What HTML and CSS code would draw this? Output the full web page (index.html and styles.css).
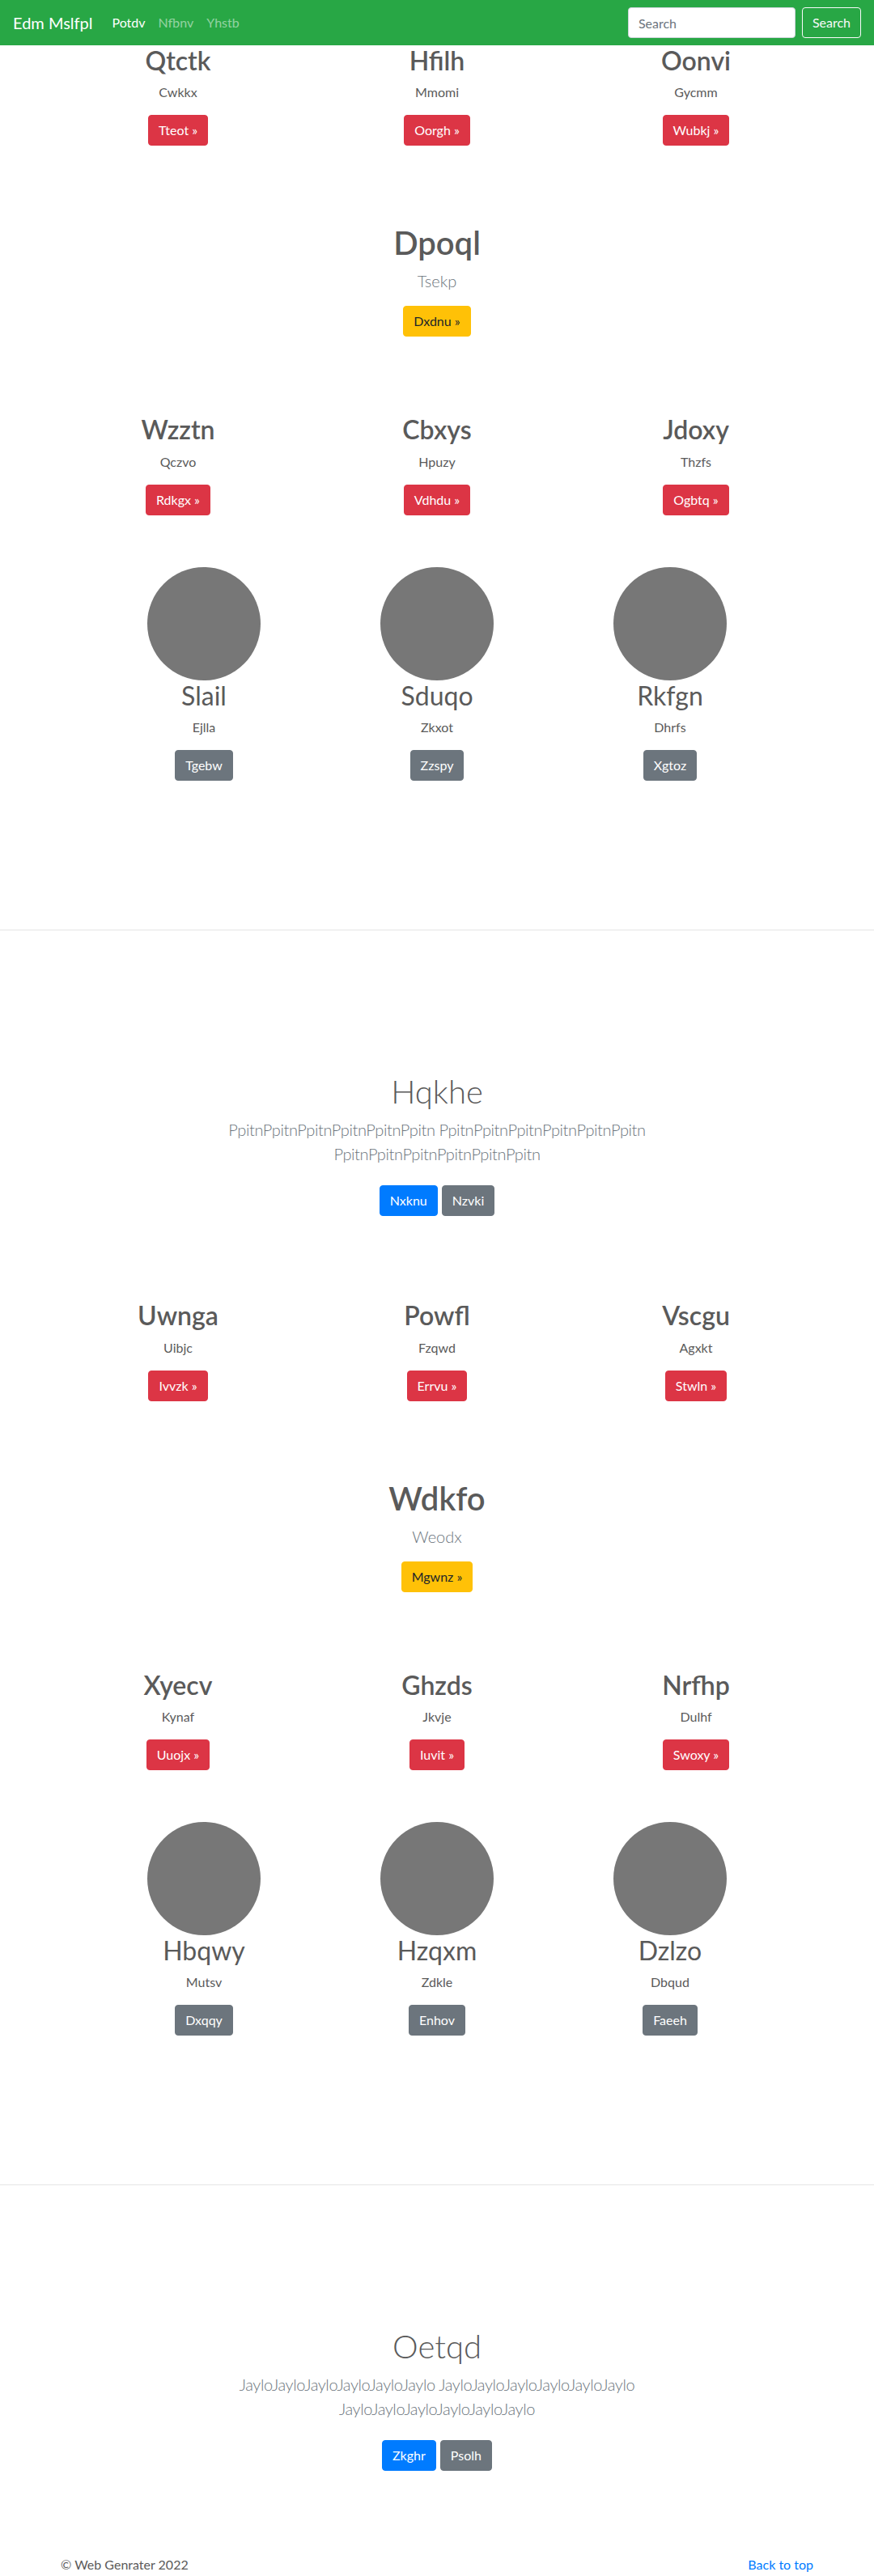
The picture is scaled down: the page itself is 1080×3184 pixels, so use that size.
FILE: index.html
```html
<!DOCTYPE html>
<html lang="en">
<head>
<meta charset="utf-8">
<title>Edm Mslfpl</title>
<link rel="stylesheet" href="styles.css">
</head>
<body>
<nav class="navbar">
  <a class="brand" href="#">Edm Mslfpl</a>
  <ul class="nav-links">
    <li><a class="active" href="#">Potdv</a></li>
    <li><a href="#">Nfbnv</a></li>
    <li><a href="#">Yhstb</a></li>
  </ul>
  <form class="search">
    <input type="text" placeholder="Search">
    <button type="button">Search</button>
  </form>
</nav>

<main>
  <section class="features gap-80">
    <div class="col"><h2>Qtctk</h2><p>Cwkkx</p><p><a class="btn btn-danger" href="#">Tteot »</a></p></div>
    <div class="col"><h2>Hfilh</h2><p>Mmomi</p><p><a class="btn btn-danger" href="#">Oorgh »</a></p></div>
    <div class="col"><h2>Oonvi</h2><p>Gycmm</p><p><a class="btn btn-danger" href="#">Wubkj »</a></p></div>
  </section>

  <section class="hero gap-80">
    <h1>Dpoql</h1>
    <p class="lead">Tsekp</p>
    <p><a class="btn btn-warning" href="#">Dxdnu »</a></p>
  </section>

  <section class="features gap-48">
    <div class="col"><h2>Wzztn</h2><p>Qczvo</p><p><a class="btn btn-danger" href="#">Rdkgx »</a></p></div>
    <div class="col"><h2>Cbxys</h2><p>Hpuzy</p><p><a class="btn btn-danger" href="#">Vdhdu »</a></p></div>
    <div class="col"><h2>Jdoxy</h2><p>Thzfs</p><p><a class="btn btn-danger" href="#">Ogbtq »</a></p></div>
  </section>

  <section class="team">
    <div class="member"><div class="avatar"></div><h2>Slail</h2><p>Ejlla</p><p><a class="btn btn-secondary" href="#">Tgebw</a></p></div>
    <div class="member"><div class="avatar"></div><h2>Sduqo</h2><p>Zkxot</p><p><a class="btn btn-secondary" href="#">Zzspy</a></p></div>
    <div class="member"><div class="avatar"></div><h2>Rkfgn</h2><p>Dhrfs</p><p><a class="btn btn-secondary" href="#">Xgtoz</a></p></div>
  </section>

  <hr class="divider">

  <section class="jumbo gap-48">
    <div class="jumbo-inner">
      <h1>Hqkhe</h1>
      <p class="lead">PpitnPpitnPpitnPpitnPpitnPpitn PpitnPpitnPpitnPpitnPpitnPpitn PpitnPpitnPpitnPpitnPpitnPpitn</p>
      <p class="actions"><a class="btn btn-primary" href="#">Nxknu</a><a class="btn btn-secondary" href="#">Nzvki</a></p>
    </div>
  </section>

  <section class="features gap-80">
    <div class="col"><h2>Uwnga</h2><p>Uibjc</p><p><a class="btn btn-danger" href="#">Ivvzk »</a></p></div>
    <div class="col"><h2>Powfl</h2><p>Fzqwd</p><p><a class="btn btn-danger" href="#">Errvu »</a></p></div>
    <div class="col"><h2>Vscgu</h2><p>Agxkt</p><p><a class="btn btn-danger" href="#">Stwln »</a></p></div>
  </section>

  <section class="hero gap-80">
    <h1>Wdkfo</h1>
    <p class="lead">Weodx</p>
    <p><a class="btn btn-warning" href="#">Mgwnz »</a></p>
  </section>

  <section class="features gap-48">
    <div class="col"><h2>Xyecv</h2><p>Kynaf</p><p><a class="btn btn-danger" href="#">Uuojx »</a></p></div>
    <div class="col"><h2>Ghzds</h2><p>Jkvje</p><p><a class="btn btn-danger" href="#">Iuvit »</a></p></div>
    <div class="col"><h2>Nrfhp</h2><p>Dulhf</p><p><a class="btn btn-danger" href="#">Swoxy »</a></p></div>
  </section>

  <section class="team">
    <div class="member"><div class="avatar"></div><h2>Hbqwy</h2><p>Mutsv</p><p><a class="btn btn-secondary" href="#">Dxqqy</a></p></div>
    <div class="member"><div class="avatar"></div><h2>Hzqxm</h2><p>Zdkle</p><p><a class="btn btn-secondary" href="#">Enhov</a></p></div>
    <div class="member"><div class="avatar"></div><h2>Dzlzo</h2><p>Dbqud</p><p><a class="btn btn-secondary" href="#">Faeeh</a></p></div>
  </section>

  <hr class="divider">

  <section class="jumbo">
    <div class="jumbo-inner">
      <h1>Oetqd</h1>
      <p class="lead">JayloJayloJayloJayloJayloJaylo JayloJayloJayloJayloJayloJaylo JayloJayloJayloJayloJayloJaylo</p>
      <p class="actions"><a class="btn btn-primary" href="#">Zkghr</a><a class="btn btn-secondary" href="#">Psolh</a></p>
    </div>
  </section>
</main>

<footer class="footer">
  <p>© Web Genrater 2022</p>
  <p><a href="#">Back to top</a></p>
</footer>
</body>
</html>
```

FILE: styles.css
```css
* { box-sizing: border-box; }

html, body { margin: 0; padding: 0; }

body {
  font-family: Lato, "Segoe UI", "Open Sans", sans-serif;
  font-size: 16px;
  line-height: 1.5;
  color: #5a5a5a;
  background: #fff;
}

/* navbar */
.navbar {
  display: flex;
  align-items: center;
  height: 56px;
  padding: 8px 16px;
  background: #28a745;
}
.brand {
  font-size: 20px;
  line-height: 30px;
  color: #fff;
  text-decoration: none;
  margin-right: 16px;
}
.nav-links {
  display: flex;
  flex: 1;
  list-style: none;
  margin: 0;
  padding: 0;
}
.nav-links a {
  display: block;
  padding: 8px;
  color: rgba(255, 255, 255, 0.5);
  text-decoration: none;
}
.nav-links a.active { color: #fff; }
.search { display: flex; margin: 0; }
.search input {
  width: 207px;
  height: 38px;
  margin-right: 8px;
  padding: 6px 12px;
  font: inherit;
  color: #495057;
  background: #fff;
  border: 1px solid #ced4da;
  border-radius: 4px;
}
.search input::placeholder { color: #6c757d; }
.search button {
  height: 38px;
  padding: 6px 12px;
  font: inherit;
  color: #f8f9fa;
  background: transparent;
  border: 1px solid #f8f9fa;
  border-radius: 4px;
}

/* buttons */
.btn {
  display: inline-block;
  padding: 6px 12px;
  font-size: 16px;
  line-height: 24px;
  color: #fff;
  text-decoration: none;
  border: 1px solid transparent;
  border-radius: 4px;
}
.btn-danger { background: #dc3545; border-color: #dc3545; }
.btn-warning { background: #ffc107; border-color: #ffc107; color: #212529; }
.btn-secondary { background: #6c757d; border-color: #6c757d; }
.btn-primary { background: #007bff; border-color: #007bff; }

/* spacing between blocks */
.gap-80 { margin-bottom: 80px; }
.gap-48 { margin-bottom: 48px; }

/* three column features */
.features {
  display: grid;
  grid-template-columns: repeat(3, 1fr);
  width: 960px;
  margin-left: auto;
  margin-right: auto;
  text-align: center;
}
.col h2 {
  margin: 0 0 8px;
  font-size: 32px;
  font-weight: 600;
  line-height: 1.2;
}
.col p, .member p { margin: 0 0 16px; }

/* hero */
.hero {
  display: flow-root;
  text-align: center;
}
.hero h1 {
  margin: 0 0 8px;
  font-size: 40px;
  font-weight: 600;
  line-height: 1.2;
}
.lead {
  font-size: 20px;
  font-weight: 300;
  line-height: 30px;
  color: #6c757d;
  margin: 0 0 16px;
}
.hero p { margin: 0 0 16px; }

/* team */
.team {
  display: grid;
  grid-template-columns: repeat(3, 288px);
  justify-content: center;
  text-align: center;
}
.member { margin-bottom: 24px; }
.avatar {
  width: 140px;
  height: 140px;
  margin: 0 auto;
  border-radius: 50%;
  background: #777;
}
.member h2 {
  margin: 0 0 8px;
  font-size: 32px;
  font-weight: 400;
  line-height: 1.2;
}

/* divider */
.divider {
  height: 0;
  margin: 144px 0 127px;
  border: 0;
  border-top: 1px solid rgba(0, 0, 0, 0.1);
}

/* jumbotron */
.jumbo {
  padding: 48px 0;
  text-align: center;
}
.jumbo-inner {
  max-width: 640px;
  margin: 0 auto;
  padding: 0 15px;
}
.jumbo h1 {
  margin: 0 0 8px;
  font-size: 40px;
  font-weight: 300;
  line-height: 1.2;
}
.jumbo .lead { letter-spacing: -0.4px; }
.actions {
  display: flex;
  justify-content: center;
  gap: 5px;
  margin: 0;
}
.actions .btn { margin: 8px 0; }

/* footer */
.footer {
  display: flex;
  justify-content: space-between;
  width: 960px;
  margin: 48px auto 0;
  padding: 0 15px;
}
.footer p { margin: 0; }
.footer a { color: #007bff; text-decoration: none; }
```
